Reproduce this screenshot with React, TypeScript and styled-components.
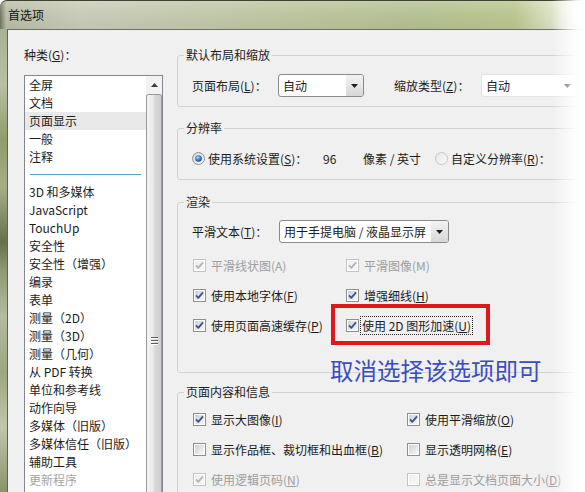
import React, { useId } from "react";
import styled, { createGlobalStyle } from "styled-components";

const FONT = `"Noto Sans CJK SC", "Noto Sans", "DejaVu Sans", sans-serif`;

const GlobalStyle = createGlobalStyle`
  html, body { margin: 0; padding: 0; background: #ffffff; }
  #root { width: 585px; height: 492px; }
`;

const Window = styled.div`
  position: relative;
  width: 585px;
  height: 492px;
  overflow: hidden;
  display: flex;
  flex-direction: column;
  font-family: ${FONT};
  font-size: 12px;
  line-height: 18px;
  color: #1c1c1c;
  background: #ffffff;
`;

const TitleBar = styled.div`
  height: 29px;
  flex: none;
  box-sizing: border-box;
  display: flex;
  align-items: center;
  padding-left: 8px;
  border-top: 1px solid #3f4232;
  border-top-left-radius: 7px;
  background:
    linear-gradient(180deg, rgba(255, 255, 255, 0.18), rgba(255, 255, 255, 0) 45%, rgba(0, 0, 0, 0.04)),
    linear-gradient(90deg, #6e7560 0px, #b9bea7 6px, #c9ccb9 14%, #c3c9ad 32%, #bcc59e 52%, #b5c292 72%, #bac78f 88%, #dfe6cc 95%, #ffffff 100%);
  color: #141414;
`;

const Frame = styled.div`
  flex: 1;
  display: flex;
  min-height: 0;
`;

const FrameEdge = styled.div`
  width: 7px;
  flex: none;
  background: linear-gradient(
    180deg,
    #aab294 0%,
    #b9c0a2 12%,
    #8f9b6c 24%,
    #a6ae86 34%,
    #66714a 46%,
    #8d9870 52%,
    #b5bca0 62%,
    #9ca67c 74%,
    #c0c6ab 86%,
    #8a9468 100%
  );
`;

const Client = styled.div`
  flex: none;
  width: 620px;
  display: flex;
  gap: 14px;
  box-sizing: border-box;
  padding: 16px 0 0 16px;
  background: #f0f0f0;
  border-left: 1px solid #5f6353;
  border-top: 1px solid #6f7262;
`;

/* ---------- category list ---------- */

const Sidebar = styled.div`
  width: 139px;
  flex: none;
  display: flex;
  flex-direction: column;
`;

const SideLabel = styled.div`
  height: 18px;
  margin-bottom: 11px;
`;

const ListBox = styled.div`
  height: 530px;
  flex: none;
  box-sizing: border-box;
  display: flex;
  border: 1px solid #828790;
  background: #ffffff;
`;

const ListItems = styled.div`
  flex: 1;
  min-width: 0;
  display: flex;
  flex-direction: column;
`;

const ListItem = styled.div<{ $selected?: boolean; $muted?: boolean }>`
  height: 18px;
  flex: none;
  padding-left: 4px;
  white-space: nowrap;
  background: ${(p) => (p.$selected ? "#e9e9e9" : "transparent")};
  color: ${(p) => (p.$muted ? "#a6a6a6" : "#1c1c1c")};
`;

const ListSeparator = styled.div`
  height: 1px;
  flex: none;
  margin: 8px 5px 8px 5px;
  background: #5d9ec4;
`;

const ScrollBar = styled.div`
  width: 16px;
  flex: none;
  display: flex;
  flex-direction: column;
  background: #f2f2f2;
`;

const ScrollButton = styled.div`
  height: 17px;
  flex: none;
  display: flex;
  align-items: center;
  justify-content: center;
`;

const ScrollThumb = styled.div`
  height: 492px;
  flex: none;
  margin-top: 1px;
  box-sizing: border-box;
  display: flex;
  flex-direction: column;
  align-items: center;
  justify-content: center;
  gap: 2px;
  border: 1px solid #9a9a9a;
  border-radius: 2px;
  background: linear-gradient(90deg, #f4f4f4 0%, #e9e9e9 45%, #d9d9d9 55%, #cfcfcf 100%);
`;

const GripLine = styled.span`
  width: 7px;
  height: 1px;
  background: #5c5c5c;
  box-shadow: 0 1px 0 #ffffff;
`;

/* ---------- option groups ---------- */

const Panels = styled.div`
  width: 420px;
  flex: none;
  display: flex;
  flex-direction: column;
`;

const Group = styled.fieldset<{ $gap?: number }>`
  margin: ${(p) => p.$gap ?? 0}px 0 0 0;
  padding: 0;
  min-width: 0;
  border: 1px solid #d3d3d3;
  border-radius: 3px;
`;

const Legend = styled.legend`
  margin-left: 6px;
  padding: 0 2px;
  line-height: 18px;
  font-size: 12px;
`;

const FieldRow = styled.div<{ $pad: string }>`
  display: flex;
  align-items: center;
  padding: ${(p) => p.$pad};
`;

const FieldLabel = styled.span<{ $w: number; $lead?: number }>`
  width: ${(p) => p.$w}px;
  margin-left: ${(p) => p.$lead ?? 0}px;
  flex: none;
  white-space: nowrap;
`;

const Select = styled.div<{ $w: number; $flat?: boolean }>`
  width: ${(p) => p.$w}px;
  height: 23px;
  flex: none;
  box-sizing: border-box;
  display: flex;
  border: 1px solid ${(p) => (p.$flat ? "#e4e4e4" : "#8a8a8a")};
  border-radius: 3px;
  background: #ffffff;
  overflow: hidden;
`;

const SelectText = styled.span`
  flex: 1;
  min-width: 0;
  padding-left: 4px;
  line-height: 21px;
  white-space: nowrap;
  overflow: hidden;
`;

const SelectArrow = styled.span<{ $flat?: boolean }>`
  width: 17px;
  flex: none;
  display: flex;
  align-items: center;
  justify-content: center;
  background: ${(p) =>
    p.$flat ? "transparent" : "linear-gradient(180deg, #f3f3f3 0%, #e6e6e6 50%, #d7d7d7 100%)"};
`;

const Choice = styled.span<{ $w: number }>`
  width: ${(p) => p.$w}px;
  flex: none;
  display: flex;
  align-items: center;
  gap: 3px;
  white-space: nowrap;
`;

const Plain = styled.span<{ $w: number }>`
  width: ${(p) => p.$w}px;
  flex: none;
  white-space: nowrap;
`;

const NumberBox = styled.span`
  width: 40px;
  height: 21px;
  flex: none;
  box-sizing: border-box;
  border: 1px solid #c9c9c9;
  background: #ffffff;
`;

const CheckGrid = styled.div<{ $col: number; $pad: string }>`
  display: grid;
  grid-template-columns: ${(p) => p.$col}px 1fr;
  grid-auto-rows: 20px;
  row-gap: 10px;
  padding: ${(p) => p.$pad};
`;

const CheckCell = styled.div`
  position: relative;
  display: flex;
  align-items: center;
  gap: 4px;
  white-space: nowrap;
`;

const CheckText = styled.span<{ $disabled?: boolean; $focused?: boolean }>`
  color: ${(p) => (p.$disabled ? "#9e9e9e" : "#1c1c1c")};
  padding: 0 1px;
  line-height: 17px;
  outline: ${(p) => (p.$focused ? "1px dotted #2a2a2a" : "none")};
  margin-left: ${(p) => (p.$focused ? "-2px" : "0")};
`;

const Highlight = styled.span`
  position: absolute;
  left: -15px;
  top: -11px;
  width: 159px;
  height: 41px;
  box-sizing: border-box;
  border: 4px solid #e2161d;
  pointer-events: none;
`;

const Note = styled.div`
  position: absolute;
  left: 330px;
  top: 356px;
  font-family: ${FONT};
  font-size: 23.5px;
  line-height: 28px;
  color: #3b4dc2;
  white-space: nowrap;
`;

const EdgeFade = styled.div`
  position: absolute;
  top: 0;
  right: 0;
  width: 34px;
  height: 100%;
  background: linear-gradient(90deg, rgba(255, 255, 255, 0) 0%, rgba(255, 255, 255, 0.55) 45%, rgba(255, 255, 255, 0.92) 75%, #ffffff 100%);
  pointer-events: none;
`;

/* ---------- small drawn controls ---------- */

function DropArrow() {
  return (
    <svg width="7" height="4" viewBox="0 0 7 4">
      <path d="M0 0 H7 L3.5 4 Z" fill="#1f1f1f" />
    </svg>
  );
}

function UpArrow() {
  return (
    <svg width="7" height="4" viewBox="0 0 7 4">
      <path d="M0 4 H7 L3.5 0 Z" fill="#3a3a3a" />
    </svg>
  );
}

function CheckGlyph({ checked, disabled }: { checked?: boolean; disabled?: boolean }) {
  const id = useId().replace(/:/g, "");
  const border = disabled ? "#c4c4c4" : "#8e8f8f";
  const mark = disabled ? "#b5b5b5" : "#3b548a";
  return (
    <svg width="13" height="13" viewBox="0 0 13 13" style={{ flex: "none" }}>
      <defs>
        <linearGradient id={`cb${id}`} x1="0" y1="0" x2="1" y2="1">
          <stop offset="0" stopColor={disabled ? "#efefef" : "#cdd1d6"} />
          <stop offset="1" stopColor={disabled ? "#f7f7f7" : "#f8f8f8"} />
        </linearGradient>
      </defs>
      <rect x="0.5" y="0.5" width="12" height="12" fill="#ffffff" stroke={border} />
      <rect x="2" y="2" width="9" height="9" fill={`url(#cb${id})`} />
      {checked && (
        <path d="M3 6.4 L5.3 8.9 L10 3.3" fill="none" stroke={mark} strokeWidth="1.8" strokeLinejoin="round" />
      )}
    </svg>
  );
}

function RadioGlyph({ checked }: { checked?: boolean }) {
  const id = useId().replace(/:/g, "");
  return (
    <svg width="13" height="13" viewBox="0 0 13 13" style={{ flex: "none" }}>
      <defs>
        <linearGradient id={`rf${id}`} x1="0" y1="0" x2="1" y2="1">
          <stop offset="0" stopColor={checked ? "#d2d5d9" : "#e6e6e6"} />
          <stop offset="1" stopColor="#fafafa" />
        </linearGradient>
        <radialGradient id={`rd${id}`} cx="0.4" cy="0.35" r="0.7">
          <stop offset="0" stopColor="#bfe6fb" />
          <stop offset="0.45" stopColor="#3c8fd0" />
          <stop offset="1" stopColor="#0f3f7c" />
        </radialGradient>
      </defs>
      <circle cx="6.5" cy="6.5" r="6" fill={`url(#rf${id})`} stroke={checked ? "#8e8f8f" : "#c6c6c6"} />
      {checked && <circle cx="6.5" cy="6.5" r="3.3" fill={`url(#rd${id})`} />}
    </svg>
  );
}

type CheckProps = {
  label: React.ReactNode;
  checked?: boolean;
  disabled?: boolean;
  focused?: boolean;
  marked?: boolean;
};

function CheckItem({ label, checked, disabled, focused, marked }: CheckProps) {
  return (
    <CheckCell>
      <CheckGlyph checked={checked} disabled={disabled} />
      <CheckText $disabled={disabled} $focused={focused}>
        {label}
      </CheckText>
      {marked && <Highlight />}
    </CheckCell>
  );
}

function Key({ k }: { k: string }) {
  return (
    <>
      (<u>{k}</u>)
    </>
  );
}

const upperCategories = ["全屏", "文档", "页面显示", "一般", "注释"];
const lowerCategories = [
  "3D 和多媒体",
  "JavaScript",
  "TouchUp",
  "安全性",
  "安全性（增强）",
  "编录",
  "表单",
  "测量（2D）",
  "测量（3D）",
  "测量（几何）",
  "从 PDF 转换",
  "单位和参考线",
  "动作向导",
  "多媒体（旧版）",
  "多媒体信任（旧版）",
  "辅助工具",
];

export default function App() {
  return (
    <Window>
      <GlobalStyle />
      <TitleBar>首选项</TitleBar>
      <Frame>
        <FrameEdge />
        <Client>
          <Sidebar>
            <SideLabel>
              种类<Key k="G" />：
            </SideLabel>
            <ListBox>
              <ListItems>
                {upperCategories.map((c) => (
                  <ListItem key={c} $selected={c === "页面显示"}>
                    {c}
                  </ListItem>
                ))}
                <ListSeparator />
                {lowerCategories.map((c) => (
                  <ListItem key={c}>{c}</ListItem>
                ))}
                <ListItem $muted>更新程序</ListItem>
              </ListItems>
              <ScrollBar>
                <ScrollButton>
                  <UpArrow />
                </ScrollButton>
                <ScrollThumb>
                  <GripLine />
                  <GripLine />
                  <GripLine />
                </ScrollThumb>
              </ScrollBar>
            </ListBox>
          </Sidebar>

          <Panels>
            <Group>
              <Legend>默认布局和缩放</Legend>
              <FieldRow $pad="10px 0 9px 14px">
                <FieldLabel $w={86}>
                  页面布局<Key k="L" />：
                </FieldLabel>
                <Select $w={86}>
                  <SelectText>自动</SelectText>
                  <SelectArrow>
                    <DropArrow />
                  </SelectArrow>
                </Select>
                <FieldLabel $w={87} $lead={30}>
                  缩放类型<Key k="Z" />：
                </FieldLabel>
                <Select $w={96} $flat>
                  <SelectText>自动</SelectText>
                  <SelectArrow $flat>
                    <DropArrow />
                  </SelectArrow>
                </Select>
              </FieldRow>
            </Group>

            <Group $gap={12}>
              <Legend>分辨率</Legend>
              <FieldRow $pad="11px 0 10px 14px">
                <Choice $w={131}>
                  <RadioGlyph checked />
                  <span>
                    使用系统设置<Key k="S" />：
                  </span>
                </Choice>
                <Plain $w={40}>96</Plain>
                <Plain $w={72}>像素 / 英寸</Plain>
                <Choice $w={143}>
                  <RadioGlyph />
                  <span>
                    自定义分辨率<Key k="R" />：
                  </span>
                </Choice>
                <NumberBox />
              </FieldRow>
            </Group>

            <Group $gap={13}>
              <Legend>渲染</Legend>
              <FieldRow $pad="9px 0 0 14px">
                <FieldLabel $w={87}>
                  平滑文本<Key k="T" />：
                </FieldLabel>
                <Select $w={170}>
                  <SelectText>用于手提电脑 / 液晶显示屏</SelectText>
                  <SelectArrow>
                    <DropArrow />
                  </SelectArrow>
                </Select>
              </FieldRow>
              <CheckGrid $col={153} $pad="12px 0 37px 15px">
                <CheckItem checked disabled label="平滑线状图(A)" />
                <CheckItem checked disabled label="平滑图像(M)" />
                <CheckItem checked label={<>使用本地字体<Key k="F" /></>} />
                <CheckItem checked label={<>增强细线<Key k="H" /></>} />
                <CheckItem checked label={<>使用页面高速缓存<Key k="P" /></>} />
                <CheckItem checked focused marked label={<>使用 2D 图形加速<Key k="U" /></>} />
              </CheckGrid>
            </Group>

            <Group $gap={10}>
              <Legend>页面内容和信息</Legend>
              <CheckGrid $col={214} $pad="8px 0 10px 15px">
                <CheckItem checked label={<>显示大图像<Key k="I" /></>} />
                <CheckItem checked label={<>使用平滑缩放<Key k="O" /></>} />
                <CheckItem label={<>显示作品框、裁切框和出血框<Key k="B" /></>} />
                <CheckItem label={<>显示透明网格<Key k="E" /></>} />
                <CheckItem checked disabled label={<>使用逻辑页码<Key k="N" /></>} />
                <CheckItem disabled label={<>总是显示文档页面大小<Key k="D" /></>} />
              </CheckGrid>
            </Group>
          </Panels>
        </Client>
      </Frame>
      <Note>取消选择该选项即可</Note>
      <EdgeFade />
    </Window>
  );
}
